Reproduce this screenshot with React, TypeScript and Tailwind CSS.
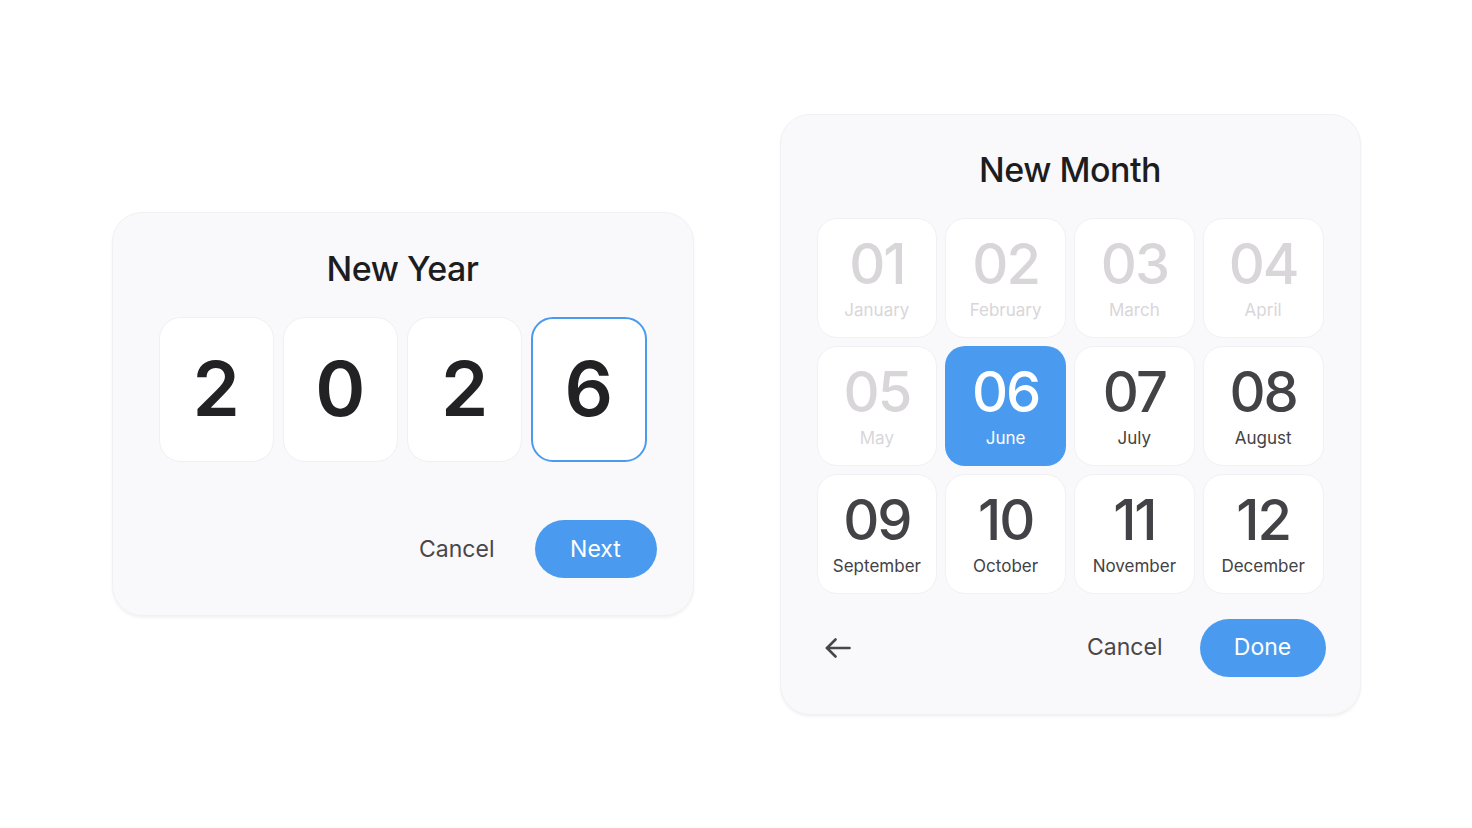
import React, { useState } from 'react';

const months = [
  'January', 'February', 'March', 'April', 'May', 'June',
  'July', 'August', 'September', 'October', 'November', 'December',
];

const font = { fontFamily: 'Inter, "Noto Sans", sans-serif' };

export default function App() {
  const [digits] = useState(['2', '0', '2', '6']);
  const [activeDigit, setActiveDigit] = useState(3);
  const [month, setMonth] = useState(6);
  const currentMonth = 7;

  return (
    <div className="w-[1472px] h-[828px] bg-white flex items-center justify-center gap-[86px]" style={font}>
      {/* year card */}
      <div className="w-[582px] h-[404px] rounded-[30px] bg-[#f9f8fb] border border-[#f2f0f4] shadow-[0_2px_3px_rgba(0,0,0,0.05)] flex flex-col pt-[36px] px-[46px]">
        <h2 className="h-[40px] text-center text-[34px] leading-[40px] font-medium tracking-[-0.5px] text-[#1d1d1f]">
          New Year
        </h2>
        <div className="mt-[28px] grid grid-cols-4 gap-[9px]">
          {digits.map((d, i) => (
            <button
              key={i}
              onClick={() => setActiveDigit(i)}
              className={
                i === activeDigit
                  ? 'h-[145px] rounded-[22px] bg-white border-2 border-[#4a9bef] flex items-center justify-center pb-[4px] text-[76px] font-semibold text-[#222224]'
                  : 'h-[145px] rounded-[22px] bg-white border border-[#f1eff3] flex items-center justify-center pb-[4px] text-[76px] font-semibold text-[#222224]'
              }
            >
              {d}
            </button>
          ))}
        </div>
        <div className="mt-[58px] flex items-center justify-end gap-[40px] -mr-[10px]">
          <button className="text-[23px] text-[#48474b]">Cancel</button>
          <button className="w-[122px] h-[58px] rounded-full bg-[#4a9bef] text-white text-[23px]">Next</button>
        </div>
      </div>

      {/* month card */}
      <div className="w-[581px] h-[601px] rounded-[30px] bg-[#f9f8fb] border border-[#f2f0f4] shadow-[0_2px_3px_rgba(0,0,0,0.05)] flex flex-col pt-[35px] px-[36px]">
        <h2 className="h-[40px] text-center text-[34px] leading-[40px] font-medium tracking-[-0.5px] text-[#1d1d1f]">
          New Month
        </h2>
        <div className="mt-[28px] grid grid-cols-4 gap-2">
          {months.map((name, i) => {
            const n = i + 1;
            const selected = n === month;
            const past = n < currentMonth && !selected;
            return (
              <button
                key={name}
                onClick={() => setMonth(n)}
                className={
                  selected
                    ? 'h-[120px] rounded-[20px] bg-[#4a9bef] flex flex-col items-center pt-[16px] text-white'
                    : past
                      ? 'h-[120px] rounded-[20px] bg-white border border-[#f2f0f4] flex flex-col items-center pt-[15px] text-[#d9d6d9]'
                      : 'h-[120px] rounded-[20px] bg-white border border-[#f2f0f4] flex flex-col items-center pt-[15px] text-[#434246]'
                }
              >
                <span className="text-[56px] leading-[60px] font-medium tracking-[-2px]">{String(n).padStart(2, '0')}</span>
                <span className="text-[17px] leading-[20px] mt-[6px]">{name}</span>
              </button>
            );
          })}
        </div>
        <div className="mt-[25px] flex items-center -mr-[2px]">
          <button className="ml-[8px] text-[#48474b]">
            <svg width="26" height="20" viewBox="0 0 26 20" fill="none" stroke="currentColor" strokeWidth="2.6" strokeLinecap="round" strokeLinejoin="round">
              <path d="M24.5 10H2" />
              <path d="M10.5 1.5 2 10l8.5 8.5" />
            </svg>
          </button>
          <div className="ml-auto flex items-center gap-[37px]">
            <button className="text-[23px] text-[#48474b]">Cancel</button>
            <button className="w-[126px] h-[58px] rounded-full bg-[#4a9bef] text-white text-[23px]">Done</button>
          </div>
        </div>
      </div>
    </div>
  );
}
